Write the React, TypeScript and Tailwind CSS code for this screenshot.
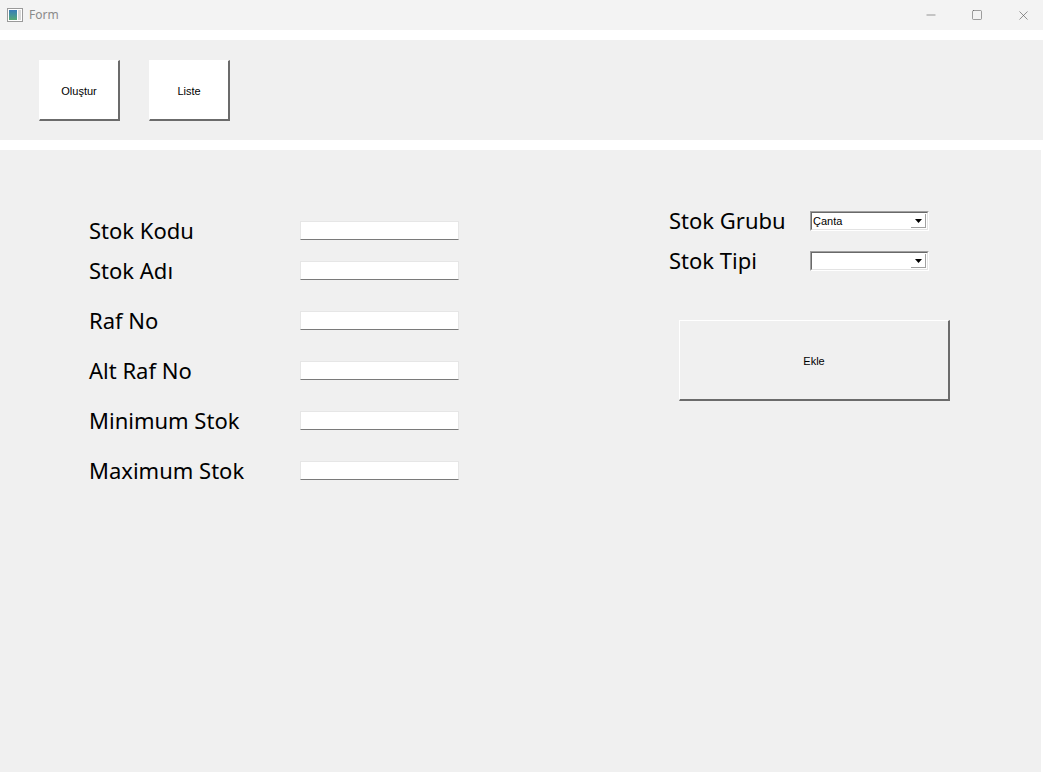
import { Minus, Square, X } from 'lucide-react'

const leftRows = [
  { label: 'Stok Kodu', gap: false },
  { label: 'Stok Adı', gap: false },
  { label: 'Raf No', gap: true },
  { label: 'Alt Raf No', gap: true },
  { label: 'Minimum Stok', gap: true },
  { label: 'Maximum Stok', gap: true },
]

function WinButton({ label, className }: { label: string; className: string }) {
  return (
    <button
      className={`flex items-center justify-center border-t border-l border-t-white border-l-white border-r-2 border-b-2 border-r-[#6b6b6b] border-b-[#6b6b6b] pt-[2px] text-[11px] text-black ${className}`}
      style={{ fontFamily: '"Liberation Sans", Arial, sans-serif' }}
    >
      {label}
    </button>
  )
}

function ComboBox({ value }: { value: string }) {
  return (
    <div className="flex h-[20px] w-[119px] border border-t-[#a0a0a0] border-l-[#a0a0a0] border-r-white border-b-white">
      <div className="flex flex-1 border border-t-[#696969] border-l-[#696969] border-r-[#e3e3e3] border-b-[#e3e3e3] bg-white">
        <div
          className="flex flex-1 items-center pl-[1px] text-[11px] leading-none text-black"
          style={{ fontFamily: '"Liberation Sans", Arial, sans-serif' }}
        >
          {value}
        </div>
        <div className="my-[1px] mr-[1px] flex w-[15px] items-center justify-center border-r border-b border-r-[#a0a0a0] border-b-[#a0a0a0] bg-white">
          <svg width="7" height="4" viewBox="0 0 7 4">
            <path d="M0 0h7L3.5 4z" fill="#000" />
          </svg>
        </div>
      </div>
    </div>
  )
}

export default function App() {
  const labelFont = { fontFamily: '"Noto Sans", "Open Sans", sans-serif' }

  return (
    <div className="flex h-[772px] w-[1043px] flex-col overflow-hidden bg-[#f0f0f0]">
      {/* Title bar */}
      <div className="flex h-[30px] shrink-0 items-center bg-[#f3f3f3]">
        <div className="ml-[7px] flex h-[14px] w-[16px] border border-[#9a9a9a] bg-white p-[1px]">
          <div className="h-full w-[8px] bg-gradient-to-b from-[#3a7bb8] to-[#57a873]" />
          <div className="ml-[1px] h-full flex-1 bg-[#d8d8d8]" />
        </div>
        <span className="ml-[6px] text-[12px] text-[#8a8a8a]" style={labelFont}>
          Form
        </span>
        <div className="ml-auto mr-[-3px] flex h-full">
          <div className="flex w-[46px] items-center justify-center text-[#555]">
            <Minus size={14} strokeWidth={1} />
          </div>
          <div className="flex w-[46px] items-center justify-center text-[#555]">
            <Square size={12} strokeWidth={1.1} />
          </div>
          <div className="flex w-[46px] items-center justify-center text-[#555]">
            <X size={15} strokeWidth={1} />
          </div>
        </div>
      </div>

      {/* Top panel */}
      <div className="shrink-0 bg-white py-[10px]">
        <div className="flex h-[100px] gap-[29px] bg-[#f0f0f0] pl-[39px] pt-[20px]">
          <WinButton label="Oluştur" className="h-[61px] w-[81px] bg-white" />
          <WinButton label="Liste" className="h-[61px] w-[81px] bg-white" />
        </div>
      </div>

      {/* Main */}
      <div className="flex flex-1 border-r-2 border-r-white pl-[89px]">
        <div className="flex w-[580px] flex-col pt-[60px]">
          {leftRows.map((row) => (
            <div key={row.label} className={`flex h-[40px] items-center ${row.gap ? 'mt-[10px]' : ''}`}>
              <span className="w-[211px] text-[22px] text-black" style={labelFont}>
                {row.label}
              </span>
              <div className="h-[19px] w-[159px] border border-[#e6e6e6] border-b-[#7a7a7a] bg-white" />
            </div>
          ))}
        </div>

        <div className="flex flex-col pt-[51px]">
          <div className="flex h-[40px] items-center">
            <span className="mt-[-1px] w-[141px] text-[22px] text-black" style={labelFont}>
              Stok Grubu
            </span>
            <ComboBox value="Çanta" />
          </div>
          <div className="flex h-[40px] items-center">
            <span className="mt-[-1px] w-[141px] text-[22px] text-black" style={labelFont}>
              Stok Tipi
            </span>
            <ComboBox value="" />
          </div>
          <WinButton label="Ekle" className="ml-[10px] mt-[39px] h-[81px] w-[271px] bg-[#f0f0f0]" />
        </div>
      </div>
    </div>
  )
}
